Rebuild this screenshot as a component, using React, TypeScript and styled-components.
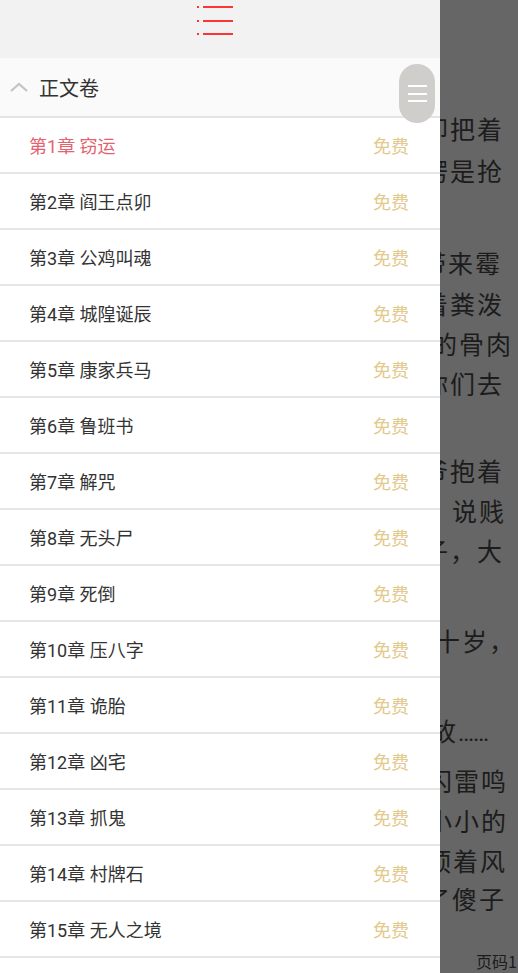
import React from 'react'
import styled, { createGlobalStyle } from 'styled-components'

const GlobalStyle = createGlobalStyle`
  html, body {
    margin: 0;
    padding: 0;
    height: 100%;
    overflow: hidden;
  }
  body {
    font-family: Roboto, "Noto Sans CJK SC", sans-serif;
  }
`

const chapters = [
  '窃运', '阎王点卯', '公鸡叫魂', '城隍诞辰', '康家兵马', '鲁班书', '解咒', '无头尸',
  '死倒', '压八字', '诡胎', '凶宅', '抓鬼', '村牌石', '无人之境',
]

// reader lines peeking out from behind the drawer: [text, top gap, right padding]
const pageLines: [string, number, number][] = [
  ['却把着', 108, 14],
  ['楞是抢', 2, 14],
  ['带来霉', 52, 16],
  ['着粪泼', 1, 14],
  ['的骨肉', 0, 5],
  ['你们去', 0, 14],
  ['爷抱着', 47, 14],
  ['，说贱', 0, 12],
  ['子，大', 0, 14],
  ['十岁，', 50, 2],
  ['故', 50, 30],
  ['闪雷鸣', 10, 10],
  ['小小的', 0, 10],
  ['顶着风', 0, 11],
  ['了傻子', -2, 12],
]

export default function App() {
  return (
    <Screen>
      <GlobalStyle />
      <ReaderColumn>
        {pageLines.map(([text, gap, pr], i) => (
          <PageLine key={i} $gap={gap} $pr={pr}>
            <span>
              {text}
              {i === 10 && <Ellipsis>……</Ellipsis>}
            </span>
          </PageLine>
        ))}
        <PageNumber>页码1</PageNumber>
      </ReaderColumn>

      <Drawer>
        <DrawerHeader>
          <svg width="40" height="38" viewBox="0 0 40 38">
            <g fill="#ff3434">
              <rect x="1" y="6" width="2" height="2" />
              <rect x="1" y="20" width="2" height="2" />
              <rect x="1" y="33" width="2" height="2" />
              <rect x="7" y="6" width="30" height="2" />
              <rect x="7" y="20" width="30" height="2" />
              <rect x="7" y="33" width="30" height="2" />
            </g>
          </svg>
        </DrawerHeader>
        <VolumeRow>
          <svg width="20" height="12" viewBox="0 0 20 12">
            <polyline points="2,10 10,3 18,10" fill="none" stroke="#c4c4c4" strokeWidth="2.2" />
          </svg>
          <VolumeTitle>正文卷</VolumeTitle>
        </VolumeRow>
        <ChapterList>
          {chapters.map((name, i) => (
            <ChapterRow key={i}>
              <ChapterName $active={i === 0}>第{i + 1}章 {name}</ChapterName>
              <FreeTag>免费</FreeTag>
            </ChapterRow>
          ))}
        </ChapterList>
        <ScrollHandle>
          <HandleLine />
          <HandleLine />
          <HandleLine />
        </ScrollHandle>
      </Drawer>
    </Screen>
  )
}

const Screen = styled.div`
  position: relative;
  width: 518px;
  height: 973px;
  overflow: hidden;
  background: #666666;
`

const ReaderColumn = styled.div`
  margin-left: 440px;
  width: 78px;
  height: 973px;
  overflow: hidden;
  display: flex;
  flex-direction: column;
  font-family: "Noto Sans CJK SC", sans-serif;
  color: #1c1c1c;
`

const PageLine = styled.div<{ $gap: number; $pr: number }>`
  flex: none;
  display: flex;
  justify-content: flex-end;
  margin-top: ${p => p.$gap}px;
  padding-right: ${p => p.$pr}px;
  height: 40px;
  line-height: 40px;
  font-size: 25px;
  letter-spacing: 2px;
  white-space: nowrap;

  span {
    flex: none;
  }
`

const Ellipsis = styled.span`
  font-family: Roboto, sans-serif;
  letter-spacing: -1px;
  font-size: 24px;
`

const PageNumber = styled.div`
  margin-top: auto;
  padding-left: 36px;
  height: 22px;
  line-height: 20px;
  font-size: 16px;
  white-space: nowrap;
`

const Drawer = styled.aside`
  position: absolute;
  top: 0;
  left: 0;
  bottom: 0;
  width: 440px;
  background: #ffffff;
  display: flex;
  flex-direction: column;
  overflow: hidden;
`

const DrawerHeader = styled.div`
  flex: none;
  height: 58px;
  background: #f2f2f2;
  display: flex;
  justify-content: center;
  align-items: flex-start;
  padding-right: 8px;
`

const VolumeRow = styled.div`
  flex: none;
  height: 58px;
  background: #fafafa;
  border-bottom: 2px solid #e4e4e4;
  display: flex;
  align-items: center;
  gap: 10px;
  padding-left: 9px;
`

const VolumeTitle = styled.span`
  font-size: 20px;
  color: #333333;
  font-family: "Noto Sans CJK SC", sans-serif;
`

const ChapterList = styled.div`
  flex: none;
  display: flex;
  flex-direction: column;
`

const ChapterRow = styled.div`
  flex: none;
  height: 54px;
  border-bottom: 2px solid #e6e6e6;
  display: flex;
  align-items: center;
  justify-content: space-between;
  padding: 0 31px 0 29px;
  font-size: 18px;
`

const ChapterName = styled.span<{ $active?: boolean }>`
  color: ${p => (p.$active ? '#e2636f' : '#333333')};
`

const FreeTag = styled.span`
  color: #e2c98c;
`

const ScrollHandle = styled.div`
  position: absolute;
  top: 64px;
  left: 399px;
  width: 36px;
  height: 59px;
  border-radius: 18px;
  background: #cfcecb;
  display: flex;
  flex-direction: column;
  align-items: center;
  justify-content: center;
  gap: 5.5px;
`

const HandleLine = styled.div`
  width: 19px;
  height: 2px;
  background: #ffffff;
`
